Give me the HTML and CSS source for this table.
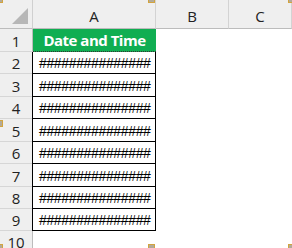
FILE: index.html
```html
<!DOCTYPE html>
<html lang="en">
<head>
<meta charset="utf-8">
<title>Date and Time</title>
<link rel="stylesheet" href="styles.css">
</head>
<body>
<div class="sheet">
  <div class="corner"><span class="corner-tri"></span></div>
  <div class="colhead">A</div>
  <div class="colhead">B</div>
  <div class="colhead">C</div>

  <div class="rowhead">1</div>
  <div class="cell title">Date and Time</div>
  <div class="blank"></div><div class="blank"></div>

  <div class="rowhead">2</div><div class="cell hash">###############</div><div class="blank"></div><div class="blank"></div>
  <div class="rowhead">3</div><div class="cell hash">###############</div><div class="blank"></div><div class="blank"></div>
  <div class="rowhead">4</div><div class="cell hash">###############</div><div class="blank"></div><div class="blank"></div>
  <div class="rowhead">5</div><div class="cell hash">###############</div><div class="blank"></div><div class="blank"></div>
  <div class="rowhead">6</div><div class="cell hash">###############</div><div class="blank"></div><div class="blank"></div>
  <div class="rowhead">7</div><div class="cell hash">###############</div><div class="blank"></div><div class="blank"></div>
  <div class="rowhead">8</div><div class="cell hash">###############</div><div class="blank"></div><div class="blank"></div>
  <div class="rowhead">9</div><div class="cell hash last">###############</div><div class="blank"></div><div class="blank"></div>

  <div class="rowhead">10</div><div class="blank"></div><div class="blank"></div><div class="blank"></div>
</div>

<!-- resize handles of the selected picture -->
<span class="handle h-tl"></span>
<span class="handle h-tm"></span>
<span class="handle h-tr"></span>
<span class="handle h-ml"></span>
<span class="handle h-bl"></span>
<span class="handle h-bm"></span>
<span class="handle h-br"></span>
</body>
</html>
```
FILE: styles.css
```css
html, body {
  margin: 0;
  padding: 0;
  background: #ffffff;
}

body {
  width: 292px;
  height: 248px;
  overflow: hidden;
  position: relative;
  font-family: "Open Sans", "Liberation Sans", sans-serif;
}

.sheet {
  display: grid;
  grid-template-columns: 33px 123px 73px 63px;
  grid-template-rows: 29px 23px 22px 23px 22px 23px 22px 23px 22px 22px 22px;
  height: 248px;
  overflow: hidden;
}

.corner {
  background: #efefef;
  border-right: 1px solid #d0d0d0;
  border-bottom: 1px solid #bcbcbc;
  position: relative;
}

.corner-tri {
  position: absolute;
  right: 4px;
  bottom: 4px;
  width: 0;
  height: 0;
  border-left: 16px solid transparent;
  border-bottom: 16px solid #b7b7b7;
}

.colhead {
  background: #efefef;
  border-right: 1px solid #d3d3d3;
  border-bottom: 1px solid #bcbcbc;
  color: #222222;
  font-size: 15px;
  display: flex;
  align-items: center;
  justify-content: center;
  padding-top: 3px;
  box-sizing: border-box;
}

.colhead:last-child {
  border-right: none;
  justify-content: flex-end;
  padding-right: 6px;
}

.rowhead {
  background: #efefef;
  border-bottom: 1px solid #d6d6d6;
  border-right: 1px solid #bcbcbc;
  color: #222222;
  font-size: 15px;
  display: flex;
  align-items: center;
  justify-content: center;
  padding-top: 1px;
  box-sizing: border-box;
}

.cell {
  box-sizing: border-box;
  display: flex;
  align-items: center;
}

.title {
  background: #10ae52;
  color: #ffffff;
  font-weight: 700;
  font-size: 15px;
  justify-content: center;
  border-bottom: 1px dotted #333333;
  letter-spacing: -0.5px;
}

.hash {
  border-left: 1px solid #000000;
  border-right: 1px solid #000000;
  border-bottom: 1px solid #000000;
  font-family: "Liberation Sans", Arial, sans-serif;
  font-size: 14px;
  letter-spacing: -0.35px;
  color: #000000;
  padding-left: 6px;
  padding-top: 1px;
  overflow: hidden;
  white-space: nowrap;
  margin-left: -1px;
}

.blank {
  background: #ffffff;
}

.handle {
  position: absolute;
  width: 7px;
  height: 7px;
  background: #b3aa98;
  border: 1px solid #d2a43f;
  box-sizing: border-box;
}

.h-tl { left: -4px; top: -4px; }
.h-tm { left: 148px; top: -4px; }
.h-tr { left: 288px; top: -4px; }
.h-ml { left: -4px; top: 120px; }
.h-bl { left: -4px; top: 244px; }
.h-bm { left: 148px; top: 244px; }
.h-br { left: 288px; top: 244px; }
```
